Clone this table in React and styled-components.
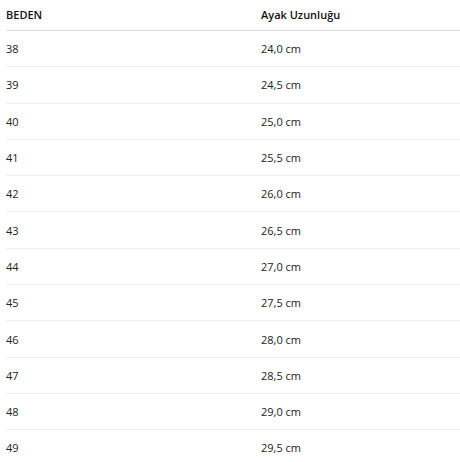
import React from "react";
import styled, { createGlobalStyle } from "styled-components";

const GlobalStyle = createGlobalStyle`
  body {
    margin: 0;
    background: #ffffff;
    font-family: "Open Sans", "Noto Sans", sans-serif;
  }
`;

const Table = styled.div`
  margin-left: 6px;
  width: 454px;
  color: #222222;
  font-size: 11px;
`;

const Row = styled.div`
  display: grid;
  grid-template-columns: 255px 1fr;
  align-items: center;
  height: ${(p) => (p.$head ? "29px" : "35.3px")};
  padding-bottom: ${(p) => (p.$head ? "1px" : "0")};
  border-bottom: 1px solid ${(p) => (p.$head ? "#dcdcdc" : "#eeeeee")};
  font-weight: ${(p) => (p.$head ? 550 : 400)};
  color: ${(p) => (p.$head ? "#111111" : "inherit")};

  &:last-child {
    border-bottom: none;
  }
`;

const Cell = styled.div`
  white-space: nowrap;
`;

const sizes = [
  ["38", "24,0 cm"],
  ["39", "24,5 cm"],
  ["40", "25,0 cm"],
  ["41", "25,5 cm"],
  ["42", "26,0 cm"],
  ["43", "26,5 cm"],
  ["44", "27,0 cm"],
  ["45", "27,5 cm"],
  ["46", "28,0 cm"],
  ["47", "28,5 cm"],
  ["48", "29,0 cm"],
  ["49", "29,5 cm"],
];

export default function App() {
  return (
    <>
      <GlobalStyle />
      <Table>
        <Row $head>
          <Cell>BEDEN</Cell>
          <Cell>Ayak Uzunluğu</Cell>
        </Row>
        {sizes.map(([size, length]) => (
          <Row key={size}>
            <Cell>{size}</Cell>
            <Cell>{length}</Cell>
          </Row>
        ))}
      </Table>
    </>
  );
}
